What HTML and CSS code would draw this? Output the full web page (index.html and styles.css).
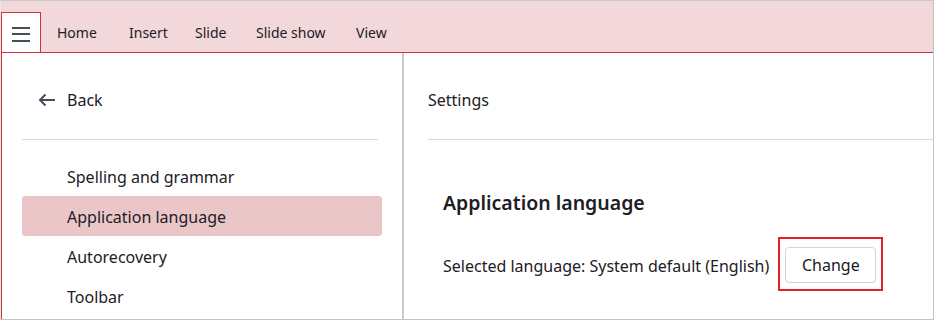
FILE: index.html
```html
<!DOCTYPE html>
<html lang="en">
<head>
<meta charset="utf-8">
<title>Settings</title>
<link rel="stylesheet" href="styles.css">
</head>
<body>
<div class="app">
  <header class="toolbar">
    <button class="menu-btn" aria-label="Menu">
      <svg width="18" height="16" viewBox="0 0 18 16" aria-hidden="true">
        <rect x="0" y="1" width="18" height="2" fill="#454e57"/>
        <rect x="0" y="7" width="18" height="2" fill="#454e57"/>
        <rect x="0" y="14" width="18" height="2" fill="#454e57"/>
      </svg>
    </button>
    <nav class="tabs">
      <span class="tab">Home</span>
      <span class="tab">Insert</span>
      <span class="tab">Slide</span>
      <span class="tab">Slide show</span>
      <span class="tab">View</span>
    </nav>
  </header>
  <div class="panel">
    <aside class="side">
      <div class="back">
        <svg class="back-icon" width="18" height="14" viewBox="0 0 18 14" aria-hidden="true">
          <path d="M17 7H2M7.5 1.5L2 7l5.5 5.5" fill="none" stroke="#454e57" stroke-width="2"/>
        </svg>
        <span>Back</span>
      </div>
      <div class="rule"></div>
      <ul class="list">
        <li class="item">Spelling and grammar</li>
        <li class="item active">Application language</li>
        <li class="item">Autorecovery</li>
        <li class="item">Toolbar</li>
      </ul>
    </aside>
    <main class="content">
      <div class="content-head">Settings</div>
      <div class="rule"></div>
      <section class="section">
        <h2 class="section-title">Application language</h2>
        <div class="row">
          <span class="label">Selected language: System default (English)</span>
          <span class="highlight"><button class="btn">Change</button></span>
        </div>
      </section>
    </main>
  </div>
</div>
</body>
</html>
```
FILE: styles.css
```css
* { box-sizing: border-box; }
html, body { margin: 0; padding: 0; background: #ffffff; }
body {
  font-family: "Noto Sans", "Open Sans", sans-serif;
  color: #1c2024;
}
.app {
  width: 934px;
  height: 320px;
  border-top: 1px solid #c8c8c8;
  border-right: 1px solid #c3c3c3;
  border-bottom: 1px solid #c3c3c3;
  border-left: 1px solid #efe4e5;
  display: flex;
  flex-direction: column;
  overflow: hidden;
}
.toolbar {
  height: 51px;
  flex: none;
  background: #f2d8da;
  display: flex;
  align-items: flex-end;
}
.menu-btn {
  width: 40px;
  height: 40px;
  margin: 0;
  padding: 2px 0 0 0;
  background: #ffffff;
  border: 1px solid #d2313e;
  border-bottom: none;
  display: flex;
  align-items: center;
  justify-content: center;
}
.tabs {
  display: grid;
  grid-template-columns: 72px 66px 61px 100px auto;
  height: 40px;
  align-items: center;
  padding-left: 16px;
  font-size: 14px;
  color: #1c2024;
}
.panel {
  flex: 1;
  display: flex;
  border-top: 1px solid #d2313e;
  border-left: 1px solid #d2313e;
}
.side {
  width: 402px;
  flex: none;
  border-right: 2px solid #c8ccd0;
  padding: 27px 20px 0 20px;
}
.back {
  height: 40px;
  display: flex;
  align-items: center;
  font-size: 16px;
  padding-left: 16px;
  margin-bottom: 19px;
}
.back-icon { margin-right: 11px; }
.rule { height: 1px; background: #d9d9d9; }
.side .rule { margin-right: 4px; }
.list { list-style: none; margin: 16px 0 0 0; padding: 0; }
.item {
  height: 40px;
  display: flex;
  align-items: center;
  padding-left: 45px;
  padding-top: 1px;
  font-size: 16px;
  border-radius: 3px;
}
.item.active { background: #ebc6c9; }
.content {
  flex: 1;
  padding: 27px 0 0 24px;
}
.content-head {
  height: 40px;
  display: flex;
  align-items: center;
  font-size: 16px;
  margin-bottom: 19px;
}
.section { padding-left: 15px; }
.section-title {
  margin: 49px 0 0 0;
  font-size: 19.5px;
  font-weight: 600;
  line-height: 28px;
}
.row {
  display: flex;
  align-items: center;
  margin-top: 20px;
}
.label { font-size: 16px; padding-top: 3px; }
.highlight {
  display: inline-flex;
  margin-left: 9px;
  border: 2px solid #e5202b;
  padding: 8px 5px 6px 5px;
}
.btn {
  width: 91px;
  height: 36px;
  background: #ffffff;
  border: 1px solid #d4d4d4;
  border-radius: 4px;
  font-family: inherit;
  font-size: 16px;
  color: #1c2024;
  padding: 0;
}
```
